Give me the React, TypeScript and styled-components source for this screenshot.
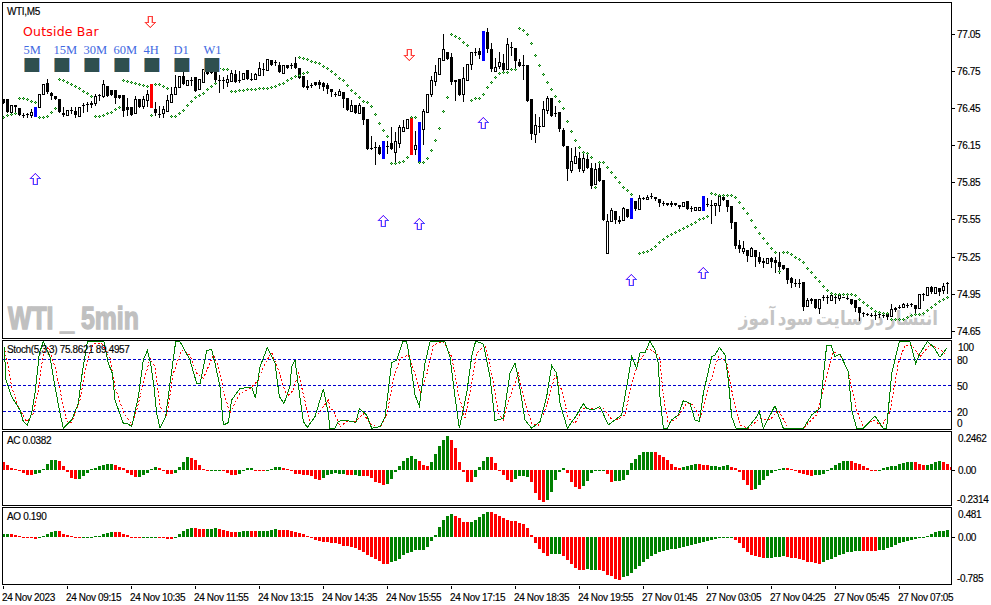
import React from "react";
import styled, { createGlobalStyle } from "styled-components";

type Kind = "b" | "h" | "B" | "R";
type Candle = [Kind, number, number, number?, number?];

// candle data is kept in 3x pixels, it was read off the chart that way
const candles: Candle[] = [
  ["b",296,308],["b",296,335],["h",315,335],["b",315,320,315,335],["b",325,345],["b",345,346,340,352],["b",343,344,340,352],["h",335,345,328,350],["B",320,350],["h",283,320],
  ["h",252,283],["b",250,275,237,280],["b",280,288,275,298],["b",288,298],["b",297,335],["b",338,345,320,348],["h",330,345],["b",330,331,320,340],["b",332,345,320,350],["h",320,347],
  ["b",316,317,308,335],["b",312,313,305,333],["b",308,315,303,320],["h",288,308,282,315],["b",285,286,282,300],["h",252,288,240,290],["b",258,288],["b",270,285],["b",270,295,270,310],["b",285,293],
  ["b",285,332,285,348],["b",320,330,295,345],["b",320,345],["h",298,338,288,338],["b",298,320],["h",298,318,288,325],["h",282,300,270,318],["R",252,323],["b",328,338,305,345],["b",342,343,318,350],
  ["h",328,340,318,350],["h",300,332,285,332],["h",282,306,262,306],["h",260,282,225,282],["h",228,260],["b",228,252,215,252],["h",240,255],["b",240,242,230,255],["b",232,272],["h",238,268],
  ["h",208,245],["b",215,222,205,222],["b",215,218],["b",215,240,215,250],["b",240,241,225,275],["b",240,241,230,265],["h",238,245,225,258],["h",220,242,210,242],["b",222,245,210,245],["b",240,241,212,245],
  ["h",218,238],["b",210,238],["b",237,238,220,240],["h",222,238,218,238],["h",205,224,185,224],["b",208,209,190,225],["h",178,210],["b",180,195],["b",185,186,180,195],["b",195,215,185,215],
  ["h",195,218],["b",195,205],["b",195,196,188,205],["b",188,205,172,205],["b",205,235],["b",228,262],["b",258,265,240,268],["b",255,256,248,262],["b",245,255],["b",245,255,240,265],
  ["b",250,262,245,270],["b",255,268,250,280],
  ["b",268,276,268,288],["b",282,283,275,288],["h",272,284,268,284],["b",275,296,275,320],["b",294,330],["h",316,332,300,332],["b",316,340],["h",314,338,308,338],["b",320,360,320,372],["b",358,447],
  ["b",444,445,408,447],["b",440,441,425,492],["b",441,462,435,462],["B",423,477],["b",437,438,422,460],["b",430,447,382,447],["h",424,456,395,488],["h",381,428,375,440],["h",381,392,360,392],["h",358,384],
  ["R",351,465],["h",435,447,393,462],["B",366,489],["h",333,386,328,432],["h",283,335],["h",240,282,228,288],["h",216,242,195,255],["h",175,221],["h",148,179,102,179],["b",156,177],
  ["b",171,247,160,252],["b",240,245,240,300],["b",236,286],["h",235,281,200,303],["h",192,239],["h",157,191,157,207],["b",157,158,143,165],["b",152,165,143,175],["B",93,183],["b",96,147,85,155],
  ["b",147,208,130,212],["h",202,212,175,212],["h",186,198,157,205],["b",190,210,162,218],["h",132,206,115,206],["b",140,143,125,165],["b",144,183,144,205],["b",186,199,178,199],["b",196,197,165,236],["b",195,303],
  ["b",297,402,297,417],["h",375,401,342,425],["b",378,382,350,395],["h",327,378,303,378],["h",294,330,288,340],["b",294,348],["b",338,339,318,348],["b",336,387,336,393],["b",390,438,384,438],["b",438,507,438,540],
  ["h",483,509,445,517],["h",468,488,440,488],["b",475,507,455,512],["h",475,509,460,517],["b",477,505,465,505],["b",503,558,490,565],["h",507,553,488,553],["b",504,543,490,543],["b",540,660],["h",663,760,642,760],
  ["h",630,662,625,662],["b",633,660,633,668],["b",660,665,648,668],["h",624,660,620,660],["b",627,650],["B",594,657],["b",603,627,603,630],["h",595,626,586,626],["b",594,595,590,598],["h",590,596,585,596],
  ["b",587,588,580,595],["b",590,596,590,600],["b",597,610,597,617],
  ["b",608,609,602,615],["b",610,615],["b",608,614,604,617],["b",608,616],["b",615,620,615,625],["h",607,617],["b",603,627],["b",625,626,618,632],["h",620,629],["h",620,629],
  ["B",588,633],["b",612,615,595,618],["b",614,615,600,668],["h",610,616,610,644],["h",588,614,588,632],["b",590,600,585,600],["b",600,620,600,632],["b",617,668,617,683],["b",666,738,666,745],["b",736,748,720,755],
  ["h",744,752,722,758],["b",750,768,750,782],["h",745,768,740,768],["b",751,770,751,797],["b",770,787,755,790],["b",782,790,775,800],["h",775,790],["b",775,787,770,800],["b",780,790,772,815],["b",787,802,757,818],
  ["b",796,806],["b",803,840,803,848],["b",835,850,830,860],["b",848,849,838,858],["b",848,849,838,860],["b",846,922,846,930],["h",900,917,893,917],["b",898,903,893,908],["b",897,923],["h",897,925,897,938],
  ["b",891,894,884,900],["b",892,893,885,908],["h",886,900],["b",891,894,885,910],["h",884,895,884,900],["b",890,891],["b",893,894,885,898],["b",897,911],["b",900,925,900,932],["b",922,940,922,960],
  ["b",939,942,935,947],["b",941,944,938,946],["b",944,945,938,948],["b",944,945,938,956],["b",943,944,938,950],["b",944,947,938,952],["b",942,950,942,957],["h",928,948,912,948],["b",925,930,920,933],["b",920,921,914,925],
  ["h",913,922,908,922],["b",914,915,910,920],["b",913,914,908,918],["b",915,928,915,945],["h",882,925],["b",881,884,880,900],["h",862,884],["b",862,875,858,880],["h",862,880],["b",865,875,865,885],
  ["h",858,870,850,878],["b",850,851,846,880],
];

// parabolic sar runs: first bar index, then one y (3x) for each following bar
const sarRuns: number[][] = [
  [0,350,345,343,340],[4,295,295,298,302,305],[9,352,352,347,335,323],[14,238,240,245,252,258,265,272,280,287],
  [23,349,348,345,340,335,328,320],[30,241,243,246,249,251,254,258],[37,346],[38,252,253,258,265],
  [42,349,347,340,331,316,304,292,285,278,266,258,248],[54,205,208,208],
  [57,274,272,270,269,268,267,266,265,264,263,262,258,252,248,240,235,229,225,220,216],[74,172,173,178,182,187,190,197,205],
  [82,214,222,235,240,256,270,280,292,302,307,319,343,370,391,408],[97,490,488,485,484,472],[102,352,352],
  [104,487,487,475,451,421,385,334,292],[112,102,108,115,127,136],[117,300,295,293,281,262,247,232,220,217,217,206,206],
  [129,85,90,103,130,166,196,223,247,268,289,304,325,364,394,421,442,457,460,472],[148,562],[149,487,487,502,517,532,547,560,571,583],
  [159,760,757,752,747,737,726,718,708,703,697,690,684,678,672,665,658,655,648],
  [177,580,583,586,586,586,586,592,605,624,640,660,680,698,715,730,745,755],[194,814],
  [195,757,757,763,770,777,787,803,817,830,844,857,870,880,883,883,883,883,883,885,896,905,914,925,932,935,938,940],
  [222,957,957,957,957,950,946,942,942,938,930,922,912,903,897,890],
];

type Pt = [number, number];

// stochastic lines, three crops of 3x points: [x origin, y origin, points]
const stochGreen: [number, number, Pt[]][] = [
  [0,200,[[12,440],[15,485],[18,540],[35,590],[60,630],[70,665],[82,675],[95,640],[105,580],[118,460],[130,425],[150,470],[165,560],[180,640],[190,685],[215,660],[235,610],[245,530],[262,425],[312,425],[325,490],[337,520],[345,600],[370,670],[385,672],[395,680],[415,590],[430,480],[442,452],[452,490],[462,560],[470,640],[480,685],[497,650],[510,550],[527,425],[540,425],[570,480],[590,550],[600,552],[620,452],[635,448],[645,490],[660,560],[670,675],[685,668],[695,600],[720,565],[755,562],[766,595],[780,500],[802,443],[825,490],[838,590],[852,610],[870,560],[875,500],[885,480],[905,630],[910,665],[922,682],[945,650],[970,567],[985,640]]],
  [330,340,[[0,265],[15,265],[25,245],[40,240],[78,247],[88,205],[110,225],[125,265],[150,260],[165,230],[175,150],[185,68],[200,60],[218,5],[230,5],[240,60],[255,165],[268,198],[285,70],[300,5],[345,5],[360,50],[375,170],[388,265],[410,160],[425,50],[437,3],[460,12],[480,110],[495,242],[520,235],[540,100],[555,70],[565,115],[585,240],[605,265],[630,245],[650,170],[665,77],[680,100],[690,190],[712,265],[740,225],[760,190],[770,205],[790,210],[810,200],[835,255],[875,225],[890,140],[905,50],[920,85],[930,38],[945,38],[960,3],[975,30],[985,70]]],
  [660,340,[[0,170],[10,265],[22,265],[35,240],[55,225],[70,182],[90,190],[105,240],[118,245],[130,160],[155,50],[165,45],[178,22],[195,45],[205,120],[215,230],[228,265],[262,265],[290,230],[298,215],[310,265],[345,197],[370,265],[430,265],[455,225],[480,205],[500,16],[513,16],[525,50],[540,42],[565,95],[575,210],[590,265],[610,265],[645,228],[670,265],[680,265],[695,100],[718,5],[750,5],[767,70],[780,40],[802,5],[820,20],[840,52],[860,25]]],
];

const stochRed: [number, number, Pt[]][] = [
  [0,200,[[12,440],[25,500],[35,560],[55,620],[80,665],[100,640],[115,570],[130,460],[145,440],[165,500],[180,570],[200,665],[215,668],[240,600],[260,490],[280,430],[305,430],[330,475],[345,560],[370,635],[395,675],[410,630],[430,550],[450,475],[465,500],[480,620],[500,650],[520,520],[545,450],[570,465],[590,520],[610,535],[640,465],[655,500],[675,590],[690,640],[720,580],[750,565],[775,540],[795,490],[815,458],[835,510],[860,590],[880,570],[895,520],[912,590],[930,670],[955,640],[985,600]]],
  [330,340,[[0,205],[10,210],[30,260],[50,245],[75,245],[100,222],[125,255],[150,262],[170,225],[190,120],[210,55],[235,45],[255,100],[270,160],[290,105],[310,15],[340,5],[365,50],[385,160],[405,235],[425,130],[440,40],[465,15],[485,100],[505,220],[520,240],[540,170],[565,100],[585,190],[605,250],[625,255],[650,200],[675,105],[695,150],[715,235],[735,250],[760,205],[790,205],[820,205],[850,245],[885,225],[905,130],[925,70],[955,25],[985,45]]],
  [660,340,[[0,60],[10,170],[25,250],[50,235],[80,190],[100,195],[120,235],[150,130],[175,50],[200,65],[215,150],[240,255],[265,265],[300,235],[330,240],[355,210],[385,265],[430,265],[470,225],[500,110],[520,35],[540,45],[565,95],[590,210],[610,262],[640,240],[665,258],[690,215],[715,70],[735,15],[755,15],[780,50],[810,15],[835,25],[855,40]]],
];

const acBars =
  "r24 r15 r6 r2 r-4 r-10 r-15 r-15 g-12 g-9 g2 g18 g30 g30 r27 r12 r-5 r-25 r-26 g-27 g-18 g-9 g2 g5 g12 g15 g18 g18 r15 r9 r6 r-8 r-15 r-20 g-20 g-15 g-8 g3 g9 r6 r-3 r-12 r-12 g-8 g8 g24 g39 r36 r30 r15 r3 r-3 g-2 g1 g1 r-2 r-8 r-15 r-15 g-12 g-3 g5 g5 r1 r-2 r-2 g-2 g2 g9 g9 r5 r2 r-3 r-11 r-11 r-14 r-15 r-18 r-27 r-30 g-24 g-15 g-12 " +
  "g-9 g-12 g-12 r-15 r-15 g-15 g-18 r-18 r-18 r-24 r-35 r-39 r-45 g-42 g-27 g-5 g12 g27 g36 g41 g33 r27 r15 r12 g24 g48 g72 g90 g102 r90 r65 r24 r-5 r-35 r-36 g-21 g9 g27 g40 r39 r21 r-2 r-15 r-30 r-36 g-27 g-18 g-18 g-20 r-35 r-69 r-90 r-96 g-90 g-65 g-30 g-6 g6 r-9 r-36 r-51 r-57 g-48 g-33 g-9 g-2 g-2 g-2 r-12 r-36 g-33 g-33 g-30 g-15 g21 g33 g45 g54 g54 g54 r54 r45 r39 " +
  "r30 r18 r9 r6 g9 g12 g15 g18 r18 r15 r14 g12 g12 g9 g12 g15 r9 r5 r-5 r-30 r-45 r-60 g-57 g-45 g-30 g-18 g-9 g-3 g2 g5 r6 r3 r-3 r-8 r-12 r-15 r-17 g-15 g-15 g-12 g-3 g6 g15 g21 g27 g27 r27 r21 r18 r12 r5 r-1 r-3 g-2 g5 g8 g12 g12 g18 g21 g24 g24 r24 r18 r15 g15 g18 g24 g27 r24 r18 r9";

const aoBars =
  "g8 g8 r8 r6 r3 r1 r-2 r-3 r-6 g-4 g2 g8 g15 g19 r17 r10 r5 r2 r-3 r-3 g-2 g-1 g1 g2 g4 g8 g13 g14 r14 r14 r10 r6 r1 r-2 r-4 g-3 g-1 g1 g1 r-1 r-4 r-6 r-6 g-1 g8 g18 g24 g26 r26 r24 r24 g24 g24 g26 r23 r20 r17 r15 r14 g15 g17 g19 r17 r17 g17 g17 g17 g20 g23 r21 r20 r20 r19 r15 r12 r9 r3 r-2 r-8 r-12 r-14 r-14 " +
  "r-18 r-18 r-20 r-27 r-27 r-30 r-33 r-39 r-45 r-54 r-60 r-66 r-72 r-80 r-80 g-76 g-72 g-65 g-55 g-47 g-45 g-40 g-40 g-38 g-30 g-12 g6 g30 g50 g63 g68 r63 r57 r46 r44 g44 g52 g60 g68 g74 r74 r69 r63 r57 r50 r48 r48 r42 r40 r26 r6 r-18 r-36 r-48 r-57 g-52 g-52 g-50 r-57 r-70 r-80 r-92 r-98 r-100 g-96 g-98 g-98 r-100 r-102 r-115 r-118 r-125 r-130 g-120 g-118 g-108 g-95 g-88 g-75 g-65 g-57 g-52 g-45 " +
  "g-42 g-40 g-37 g-35 g-32 g-30 g-27 g-24 g-20 g-18 g-15 g-12 g-9 g-6 g-4 g-2 g-1 g1 r-8 r-18 r-33 r-45 r-54 r-58 r-60 r-62 g-62 g-62 g-60 g-60 g-58 r-60 r-62 r-64 r-66 r-70 r-74 r-76 r-77 r-80 g-74 g-70 g-65 g-60 g-55 g-50 g-46 g-44 g-42 g-42 r-42 r-42 r-42 r-42 g-40 g-38 g-34 g-30 g-25 g-18 g-15 g-12 g-8 g-5 g-3 g-2 g4 g9 g14 g17 g18 g20";

const timeLabels = [
  "24 Nov 2023", "24 Nov 09:15", "24 Nov 10:35", "24 Nov 11:55", "24 Nov 13:15",
  "24 Nov 14:35", "24 Nov 15:55", "24 Nov 17:15", "24 Nov 18:35", "24 Nov 19:55",
  "27 Nov 01:45", "27 Nov 03:05", "27 Nov 04:25", "27 Nov 05:45", "27 Nov 07:05",
];

const priceLabels = ["77.05", "76.75", "76.45", "76.15", "75.85", "75.55", "75.25", "74.95", "74.65"];
const periods = ["5M", "15M", "30M", "60M", "4H", "D1", "W1"];

const upArrows: Pt[] = [[35, 173], [383, 215], [419, 218], [483, 117], [631, 274], [703, 267]];
const downArrows: Pt[] = [[150, 16], [409, 49]];

const barX = (i: number) => 3 + 4 * i;

const GlobalStyle = createGlobalStyle`
  html, body {
    margin: 0;
    background: #fff;
    overflow: hidden;
  }
`;

const Terminal = styled.div`
  width: 991px;
  height: 605px;
  padding: 2px 0 0 2px;
  box-sizing: border-box;
  display: flex;
  flex-direction: column;
  gap: 1px;
  font-family: "Liberation Sans", sans-serif;
  font-size: 10px;
  letter-spacing: -0.35px;
  color: #000;
  -webkit-text-stroke: 0.15px #000;
`;

const Row = styled.div`
  display: flex;
`;

const Pane = styled.div<{ $h: number }>`
  position: relative;
  width: 950px;
  height: ${(p) => p.$h}px;
  box-sizing: border-box;
  border: 1px solid #000;
  flex: none;
  overflow: hidden;
`;

const PlotSvg = styled.svg`
  position: relative;
  display: block;
  width: 948px;
  height: 100%;
`;

const PriceAxis = styled.div`
  display: flex;
  flex-direction: column;
  flex: none;
`;

const AxisLabel = styled.div<{ $top: number; $indent?: number; $noTick?: boolean }>`
  display: flex;
  align-items: center;
  height: 12px;
  margin-top: ${(p) => p.$top}px;
  white-space: nowrap;

  &::before {
    content: "";
    width: 3px;
    height: 1px;
    margin-right: ${(p) => 2 + (p.$indent ?? 0)}px;
    background: ${(p) => (p.$noTick ? "transparent" : "#000")};
  }
`;

const PriceColumn = styled(PriceAxis)`
  gap: 25.1px;
  padding-top: 26.5px;
`;

const PaneLegend = styled.div`
  position: absolute;
  top: 3px;
  left: 4px;
  white-space: nowrap;
`;

const OutsideBar = styled.div`
  position: absolute;
  top: 21px;
  left: 20px;
  font-family: "DejaVu Sans", sans-serif;
  font-size: 12.5px;
  letter-spacing: 0.2px;
  color: #ff0000;
  -webkit-text-stroke: 0;
  white-space: nowrap;
`;

const PeriodRow = styled.div`
  position: absolute;
  top: 40px;
  left: 20.5px;
  display: flex;
  letter-spacing: 0;
`;

const PeriodCell = styled.div`
  width: 30px;
  display: flex;
  flex-direction: column;
  gap: 1px;
  font-family: "Liberation Serif", serif;
  font-size: 12.5px;
  line-height: 14px;
  color: #4169e1;
  -webkit-text-stroke: 0;
`;

const PeriodSquare = styled.div`
  width: 14px;
  height: 14px;
  margin-left: 1.5px;
  background: #2f4f4f;
  box-shadow: -1px 0 0 #b9986f, 1px 0 0 #8fb0ff;
`;

const SymbolWatermark = styled.div`
  position: absolute;
  top: 298px;
  left: 5px;
  font-family: "Liberation Sans", sans-serif;
  font-weight: 700;
  font-size: 31px;
  line-height: 36px;
  letter-spacing: 0;
  white-space: pre;
  color: #c0c0c0;
  -webkit-text-stroke: 1.4px #c0c0c0;
  transform: scaleX(0.8);
  transform-origin: left center;
`;

const SiteWatermark = styled.div`
  position: absolute;
  top: 301px;
  left: 735px;
  width: 200px;
  font-family: "DejaVu Sans", sans-serif;
  font-weight: 700;
  font-size: 20px;
  line-height: 28px;
  letter-spacing: 0;
  word-spacing: -4px;
  direction: rtl;
  white-space: nowrap;
  color: #c4c4c4;
  -webkit-text-stroke: 0;
  transform: scaleX(0.84);
  transform-origin: right center;
`;

const TimeAxis = styled.div`
  display: flex;
`;

const TimeCell = styled.div`
  flex: none;
  width: 64px;
  padding-top: 3px;
  line-height: 12px;
  white-space: nowrap;

  &::before {
    content: "";
    display: block;
    width: 1px;
    height: 3px;
    margin-left: 1px;
    margin-top: -3px;
    margin-bottom: 3px;
    background: #000;
  }
`;

function Candles() {
  const wicks: string[] = [];
  const solid: string[] = [];
  const hollow: string[] = [];
  const blue: string[] = [];
  const red: string[] = [];

  candles.forEach(([kind, top, bottom, high, low], i) => {
    const x = barX(i);
    const y1 = Math.round(top / 3);
    const y2 = Math.round(bottom / 3);
    const hi = Math.round((high ?? top) / 3);
    const lo = Math.round((low ?? bottom) / 3);
    if (kind === "B" || kind === "R") {
      (kind === "B" ? blue : red).push(`M${x - 1} ${y1}h3V${y2}h-3z`);
      return;
    }
    if (lo > hi) wicks.push(`M${x} ${hi}h1V${lo + 1}h-1z`);
    if (kind === "b") solid.push(`M${x - 1} ${y1}h3V${Math.max(y2, y1 + 1)}h-3z`);
    else hollow.push(`M${x - 0.5} ${y1 + 0.5}h2V${y2 + 0.5}h-2z`);
  });

  return (
    <g shapeRendering="crispEdges">
      <path d={wicks.join("")} fill="#000" />
      <path d={hollow.join("")} fill="#fff" stroke="#000" />
      <path d={solid.join("")} fill="#000" />
      <path d={blue.join("")} fill="#0000ff" />
      <path d={red.join("")} fill="#ff0000" />
    </g>
  );
}

function SarDots() {
  const ring: string[] = [];
  const core: string[] = [];
  sarRuns.forEach(([start, ...ys]) => {
    ys.forEach((y, k) => {
      const x = barX(start + k);
      const c = Math.round(y / 3);
      ring.push(`M${x} ${c - 1}h1v1h-1zM${x - 1} ${c}h1v1h-1zM${x + 1} ${c}h1v1h-1zM${x} ${c + 1}h1v1h-1z`);
      core.push(`M${x} ${c}h1v1h-1z`);
    });
  });
  return (
    <g shapeRendering="crispEdges">
      <path d={core.join("")} fill="#8cc68c" />
      <path d={ring.join("")} fill="#008000" />
    </g>
  );
}

function ArrowMarks() {
  // outlined wingding style arrows, 11px tall, x is the centre and y the tip
  const up = (x: number, y: number) =>
    `M${x + 0.5} ${y + 0.5}l5 5h-3v6h-4v-6h-3z`;
  const down = (x: number, y: number) =>
    `M${x + 0.5} ${y + 11.5}l5 -5h-3v-6h-4v6h-3z`;
  return (
    <g fill="none" shapeRendering="crispEdges">
      {upArrows.map(([x, y]) => (
        <g key={`${x}-${y}`}>
          <path d={up(x - 1, y)} stroke="#ffa8ff" />
          <path d={up(x, y)} stroke="#4646ff" />
        </g>
      ))}
      {downArrows.map(([x, y]) => (
        <g key={`${x}-${y}`}>
          <path d={down(x - 1, y)} stroke="#ffc4b8" />
          <path d={down(x, y)} stroke="#ff4040" />
        </g>
      ))}
    </g>
  );
}

const toPoints = (crops: [number, number, Pt[]][]) =>
  crops
    .flatMap(([ox, oy, pts]) => pts.map(([x, y]) => `${ox + x / 3},${oy + y / 3}`))
    .join(" ");

function Histogram({ bars, zero }: { bars: string; zero: number }) {
  const shapes = { r: [] as string[], g: [] as string[] };
  bars.split(" ").forEach((bar, i) => {
    const value = Math.round(Number(bar.slice(1)) / 3);
    const color = bar[0] as "r" | "g";
    const x = barX(i) - 1;
    const h = value === 0 ? 1 : Math.abs(value);
    const y = value > 0 ? zero - h : zero;
    shapes[color].push(`M${x} ${y}h3v${h}h-3z`);
  });
  return (
    <g shapeRendering="crispEdges">
      <path d={shapes.r.join("")} fill="#ff0000" />
      <path d={shapes.g.join("")} fill="#008000" />
    </g>
  );
}

export default function App() {
  return (
    <Terminal>
      <GlobalStyle />
      <Row>
        <Pane $h={337}>
          <SymbolWatermark>WTI _ 5min</SymbolWatermark>
          <SiteWatermark>انتشار در سایت سود آموز</SiteWatermark>
          <PlotSvg viewBox="3 3 948 335">
            <Candles />
            <SarDots />
            <ArrowMarks />
          </PlotSvg>
          <PaneLegend>WTI,M5</PaneLegend>
          <OutsideBar>Outside Bar</OutsideBar>
          <PeriodRow>
            {periods.map((p) => (
              <PeriodCell key={p}>
                {p}
                <PeriodSquare />
              </PeriodCell>
            ))}
          </PeriodRow>
        </Pane>
        <PriceColumn>
          {priceLabels.map((p) => (
            <AxisLabel key={p} $top={0}>{p}</AxisLabel>
          ))}
        </PriceColumn>
      </Row>
      <Row>
        <Pane $h={90}>
          <PlotSvg viewBox="3 341 948 88">
            <g stroke="#0000cd" strokeDasharray="3 2" shapeRendering="crispEdges">
              <line x1="3" x2="951" y1="359.5" y2="359.5" />
              <line x1="3" x2="951" y1="385.5" y2="385.5" />
              <line x1="3" x2="951" y1="411.5" y2="411.5" />
            </g>
            <g fill="none" shapeRendering="crispEdges">
              <polyline points={toPoints(stochRed)} stroke="#ff0000" strokeDasharray="2 2" />
              <polyline points={toPoints(stochGreen)} stroke="#008000" />
            </g>
          </PlotSvg>
          <PaneLegend>Stoch(5,3,3) 75.8621 89.4957</PaneLegend>
        </Pane>
        <PriceAxis>
          <AxisLabel $top={1} $indent={1} $noTick>100</AxisLabel>
          <AxisLabel $top={1} $noTick>80</AxisLabel>
          <AxisLabel $top={14} $noTick>50</AxisLabel>
          <AxisLabel $top={14} $noTick>20</AxisLabel>
          <AxisLabel $top={-1} $noTick>0</AxisLabel>
        </PriceAxis>
      </Row>
      <Row>
        <Pane $h={75}>
          <PlotSvg viewBox="3 432 948 73">
            <Histogram bars={acBars} zero={470} />
          </PlotSvg>
          <PaneLegend>AC 0.0382</PaneLegend>
        </Pane>
        <PriceAxis>
          <AxisLabel $top={1} $indent={1} $noTick>0.2462</AxisLabel>
          <AxisLabel $top={20} $indent={1}>0.00</AxisLabel>
          <AxisLabel $top={17} $noTick>-0.2314</AxisLabel>
        </PriceAxis>
      </Row>
      <Row>
        <Pane $h={78}>
          <PlotSvg viewBox="3 508 948 76">
            <Histogram bars={aoBars} zero={537} />
          </PlotSvg>
          <PaneLegend>AO 0.190</PaneLegend>
        </Pane>
        <PriceAxis>
          <AxisLabel $top={1} $indent={1} $noTick>0.481</AxisLabel>
          <AxisLabel $top={11} $indent={1}>0.00</AxisLabel>
          <AxisLabel $top={29} $noTick>-0.785</AxisLabel>
        </PriceAxis>
      </Row>
      <TimeAxis>
        {timeLabels.map((t) => (
          <TimeCell key={t}>{t}</TimeCell>
        ))}
      </TimeAxis>
    </Terminal>
  );
}
